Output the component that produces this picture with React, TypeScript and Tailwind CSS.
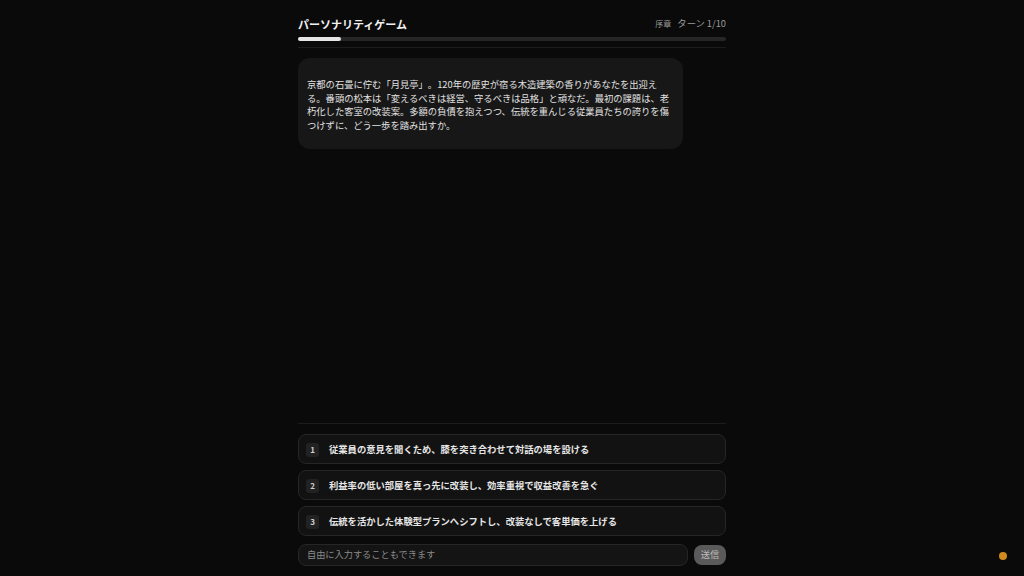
const choices = [
  "従業員の意見を聞くため、膝を突き合わせて対話の場を設ける",
  "利益率の低い部屋を真っ先に改装し、効率重視で収益改善を急ぐ",
  "伝統を活かした体験型プランへシフトし、改装なしで客単価を上げる",
];

const App = () => {
  return (
    <div
      className="relative h-[576px] w-[1024px] overflow-hidden bg-[#0a0a0a] text-[#e8e8e8] [text-spacing-trim:space-all]"
      style={{ fontFamily: '"Noto Sans CJK JP", "Noto Sans", sans-serif' }}
    >
      <div className="mx-auto flex h-full w-[428px] flex-col">
        {/* header */}
        <div className="pt-[16px]">
          <div className="flex items-center justify-between">
            <h1 className="text-[11px] font-bold leading-[16px] text-[#f0f0f0]">パーソナリティゲーム</h1>
            <div className="flex items-center gap-[6px] text-[#9a9a9a]">
              <span className="text-[8px]">序章</span>
              <span className="text-[9.3px]">ターン 1/10</span>
            </div>
          </div>
          <div className="mt-[5px] h-[4px] w-full rounded-full bg-[#262626]">
            <div className="h-full w-[10%] rounded-full bg-[#e6e6e6]" />
          </div>
          <div className="mt-[6px] h-px w-full bg-[#1c1c1c]" />
        </div>

        {/* story */}
        <div className="mt-[10px] flex-1">
          <div className="w-[385px] rounded-xl bg-[#171717] px-[9px] pt-[20px] pb-[16px] text-[9.3px] leading-[13.7px] text-[#e2e2e2]">
            京都の石畳に佇む「月見亭」。120年の歴史が宿る木造建築の香りがあなたを出迎える。番頭の松本は「変えるべきは経営、守るべきは品格」と頑なだ。最初の課題は、老朽化した客室の改装案。多額の負債を抱えつつ、伝統を重んじる従業員たちの誇りを傷つけずに、どう一歩を踏み出すか。
          </div>
        </div>

        {/* choices */}
        <div className="h-px w-full bg-[#1c1c1c]" />
        <div className="mt-[10px] flex flex-col gap-[6px]">
          {choices.map((c, i) => (
            <button
              key={i}
              className="flex h-[30px] items-center gap-[10px] rounded-lg border border-[#262626] bg-[#121212] px-[7px] pt-[2px] text-left"
            >
              <span className="flex h-[14px] w-[13px] items-center justify-center rounded-[3px] bg-[#222222] text-[8px] font-bold text-[#d0d0d0]">
                {i + 1}
              </span>
              <span className="text-[9.3px] font-bold text-[#e6e6e6]">{c}</span>
            </button>
          ))}
        </div>

        {/* input */}
        <div className="mt-[8px] mb-[10px] flex items-center gap-[6px]">
          <div className="flex h-[22px] flex-1 items-center rounded-lg border border-[#262626] bg-[#141414] px-[8px] text-[9.2px] text-[#8a8a8a]">
            自由に入力することもできます
          </div>
          <button className="flex h-[20px] w-[32px] items-center justify-center rounded-lg bg-[#5a5a5a] text-[9.2px] text-[#bdbdbd]">
            送信
          </button>
        </div>
      </div>

      <div className="absolute left-[999px] top-[552px] h-[8px] w-[8px] rounded-full bg-[#d08a1e]" />
    </div>
  );
};

export default App;
